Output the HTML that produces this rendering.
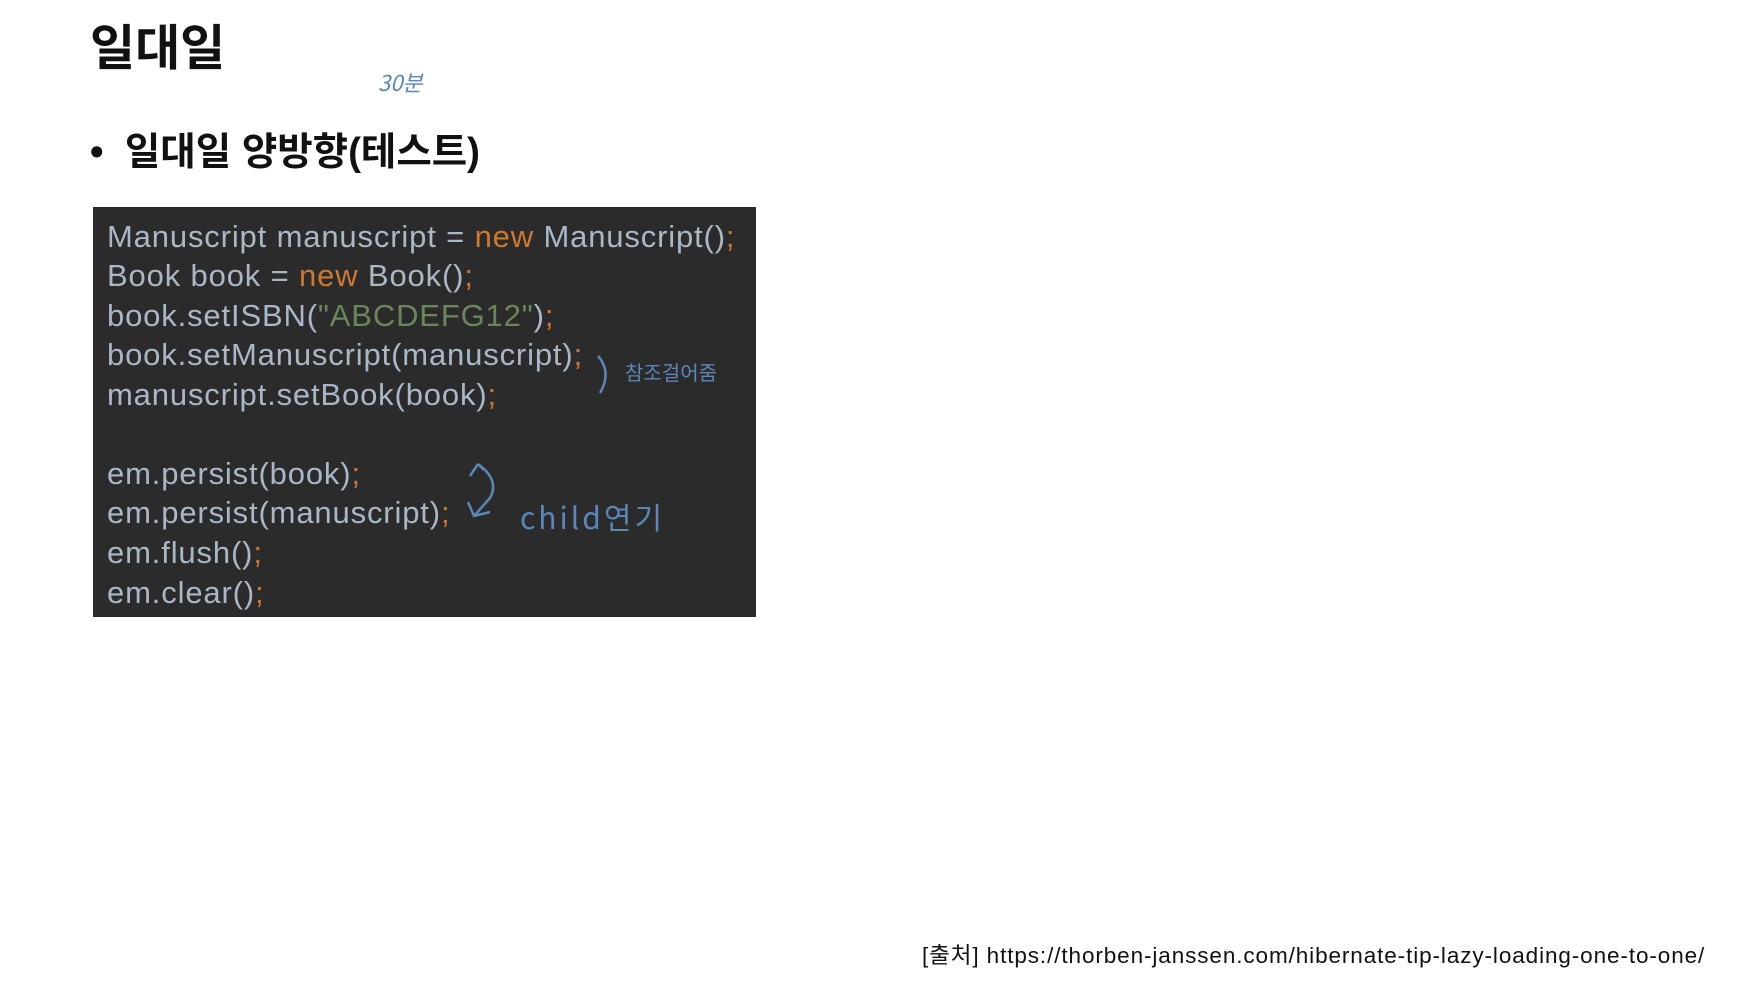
<!DOCTYPE html>
<html><head><meta charset="utf-8"><style>
body{margin:0;width:1752px;height:985px;background:#fff;position:relative;overflow:hidden;font-family:"Liberation Sans","Noto Sans CJK KR",sans-serif}
.a{position:absolute;white-space:nowrap}
#box{position:absolute;left:93px;top:207px;width:663px;height:410px;background:#2b2b2b}
.c{position:absolute;left:14px;font-size:31px;color:#a9b7c6;line-height:40px;letter-spacing:0.85px}
.o{color:#cc7832}.g{color:#6a8759}
.h{color:#5b86b8;font-family:"Noto Sans CJK KR",sans-serif}
</style></head><body>
<div class="a" style="left:90px;top:9px;font-size:49px;font-weight:bold;color:#111">일대일</div>
<div class="a h" style="left:378px;top:66px;font-size:22px;font-style:italic">30분</div>
<div class="a" style="left:90px;top:121px;font-size:38.5px;font-weight:bold;color:#111">•&nbsp; 일대일 양방향(테스트)</div>
<div id="box">
<div class="c" style="top:10px">Manuscript manuscript = <span class="o">new</span> Manuscript()<span class="o">;</span></div>
<div class="c" style="top:49px">Book book = <span class="o">new</span> Book()<span class="o">;</span></div>
<div class="c" style="top:89px">book.setISBN(<span class="g">"ABCDEFG12"</span>)<span class="o">;</span></div>
<div class="c" style="top:128px">book.setManuscript(manuscript)<span class="o">;</span></div>
<div class="c" style="top:168px">manuscript.setBook(book)<span class="o">;</span></div>
<div class="c" style="top:247px">em.persist(book)<span class="o">;</span></div>
<div class="c" style="top:286px">em.persist(manuscript)<span class="o">;</span></div>
<div class="c" style="top:326px">em.flush()<span class="o">;</span></div>
<div class="c" style="top:366px">em.clear()<span class="o">;</span></div>
</div>
<svg class="a" style="left:0;top:0" width="1752" height="985">
<path d="M598 356 Q612 372 600 393" stroke="#5b86b8" stroke-width="2.5" fill="none"/>
<path d="M478 464 Q500 480 490 498 L474 516 M468 502 L474 516 L490 512 M478 464 L470 476 M478 464 L484 470" stroke="#5b86b8" stroke-width="2.5" fill="none"/>
</svg>
<div class="a h" style="left:625px;top:357px;font-size:20px">참조걸어줌</div>
<div class="a h" style="left:520px;top:494px;font-size:30px;letter-spacing:3px">child연기</div>
<div class="a" style="left:922px;top:938px;font-size:22.5px;color:#111;letter-spacing:0.9px">[출처] https://thorben-janssen.com/hibernate-tip-lazy-loading-one-to-one/</div>
</body></html>
